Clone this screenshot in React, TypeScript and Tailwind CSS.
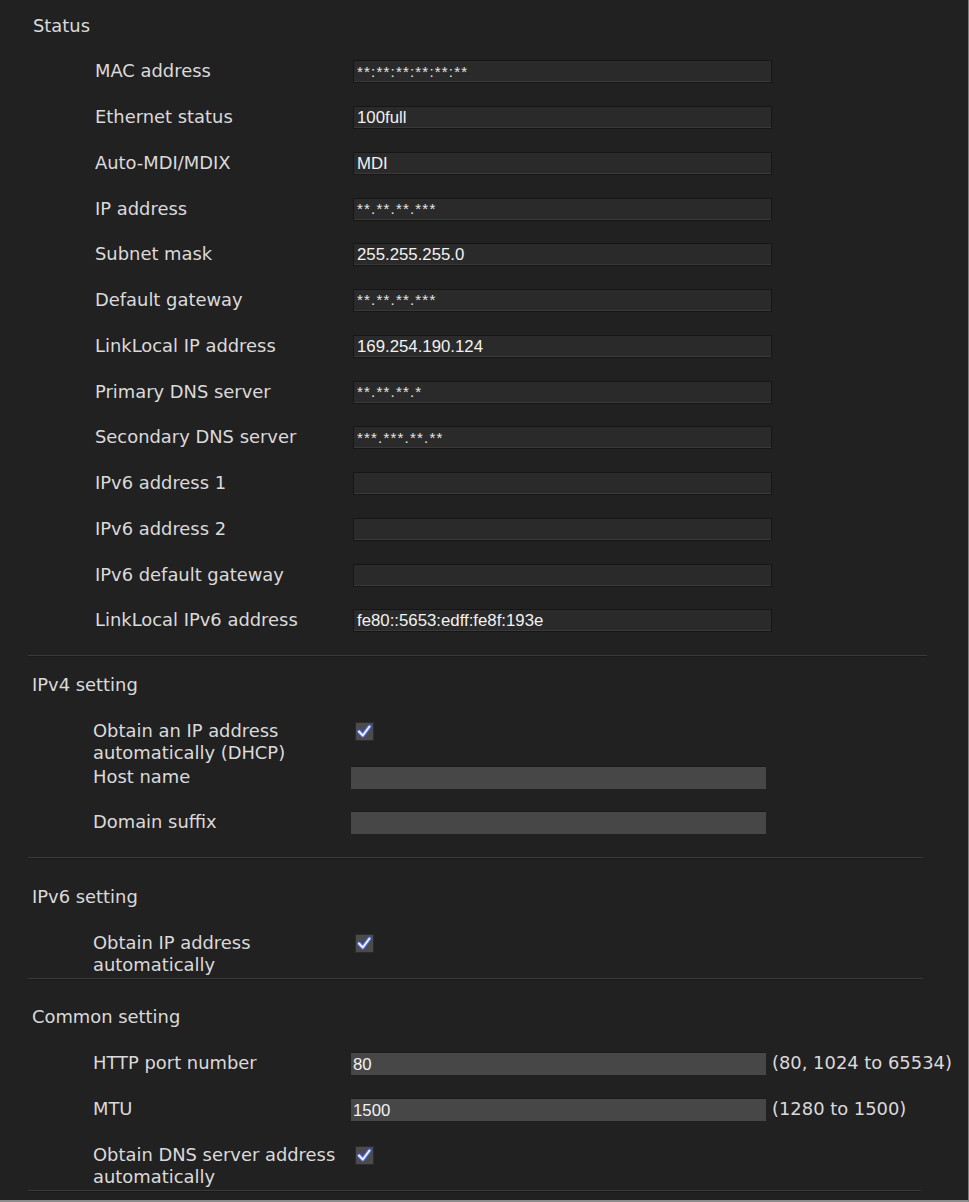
const STATUS = [
  { label: 'MAC address', value: '**:**:**:**:**:**', masked: true },
  { label: 'Ethernet status', value: '100full' },
  { label: 'Auto-MDI/MDIX', value: 'MDI' },
  { label: 'IP address', value: '**.**.**.***', masked: true },
  { label: 'Subnet mask', value: '255.255.255.0' },
  { label: 'Default gateway', value: '**.**.**.***', masked: true },
  { label: 'LinkLocal IP address', value: '169.254.190.124' },
  { label: 'Primary DNS server', value: '**.**.**.*', masked: true },
  { label: 'Secondary DNS server', value: '***.***.**.**', masked: true },
  { label: 'IPv6 address 1', value: '' },
  { label: 'IPv6 address 2', value: '' },
  { label: 'IPv6 default gateway', value: '' },
  { label: 'LinkLocal IPv6 address', value: 'fe80::5653:edff:fe8f:193e' },
]

const label = "font-['DejaVu_Sans',sans-serif] text-[17.9px] text-[#dadada]"
const valueFont = "font-['Liberation_Sans',Arial,sans-serif] text-[16.8px] text-[#f2f2f2]"

function Checkbox() {
  return (
    <svg width="19" height="19" viewBox="0 0 19 19" className="shrink-0">
      <rect x="0.5" y="0.5" width="18" height="18" fill="#4b4b4e" stroke="#2c2c2e" />
      <path d="M4 9.5 L7.8 13.5 L14.5 4.5" fill="none" stroke="#4d6ef2" strokeWidth="4" strokeLinecap="round" strokeLinejoin="round" />
      <path d="M4 9.5 L7.8 13.5 L14.5 4.5" fill="none" stroke="#eef1ff" strokeWidth="2" strokeLinecap="round" strokeLinejoin="round" />
    </svg>
  )
}

function Divider({ w }: { w: string }) {
  return <div className={`ml-[28px] h-[2px] bg-[#3a3a3b] border-b border-[#1a1a1a] ${w}`} />
}

function Heading({ children, cls }: { children: string; cls: string }) {
  return (
    <div className={`flex items-center pl-[32px] ${cls}`}>
      <span className={label}>{children}</span>
    </div>
  )
}

function GrayField({ value }: { value?: string }) {
  return (
    <div className="w-[415px] h-[23px] bg-[#474748] border-t border-[#1b1b1b] flex items-center pl-[2px]">
      <span className={valueFont}>{value}</span>
    </div>
  )
}

export default function App() {
  return (
    <div className="w-[969px] h-[1202px] bg-[#222122] border-r border-[#7c7c7c] border-b-2 border-b-[#8c8c8c] overflow-hidden pt-[4px]">
      <Heading cls="h-[45px] pl-[33px]">Status</Heading>
      <div className="flex flex-col">
        {STATUS.map((r) => (
          <div key={r.label} className="h-[45.75px] flex items-center pl-[95px]">
            <div className={`w-[258px] ${label}`}>{r.label}</div>
            <div className="w-[419px] h-[23px] bg-[#2b2a2b] border border-[#161616] shadow-[inset_0_-1px_0_#3a3a3a] flex items-center pl-[3px]">
              {r.masked ? (
                <span className="font-['Liberation_Sans',Arial,sans-serif] text-[15px] tracking-[1.2px] text-[#e6e6e6]">
                  {r.value}
                </span>
              ) : (
                <span className={valueFont}>{r.value}</span>
              )}
            </div>
          </div>
        ))}
      </div>

      <div className="mt-[11px]">
        <Divider w="w-[899px]" />
      </div>

      <Heading cls="h-[58px]">IPv4 setting</Heading>
      <div className="flex items-start pl-[93px] mt-[5px]">
        <div className={`w-[262px] leading-[22px] ${label}`}>
          Obtain an IP address
          <br />
          automatically (DHCP)
        </div>
        <div className="pt-[2px]">
          <Checkbox />
        </div>
      </div>
      <div className="h-[36px] flex items-start pl-[93px] pt-[2px]">
        <div className={`w-[258px] leading-[22px] ${label}`}>Host name</div>
        <GrayField />
      </div>
      <div className="h-[46px] flex items-center pl-[93px]">
        <div className={`w-[258px] ${label}`}>Domain suffix</div>
        <GrayField />
      </div>

      <div className="mt-[11px]">
        <Divider w="w-[895px]" />
      </div>

      <Heading cls="h-[58px] pt-[20px]">IPv6 setting</Heading>
      <div className="flex items-start pl-[93px] mt-[15px]">
        <div className={`w-[262px] leading-[22px] ${label}`}>
          Obtain IP address
          <br />
          automatically
        </div>
        <div className="pt-[2px]">
          <Checkbox />
        </div>
      </div>

      <div className="mt-[2px]">
        <Divider w="w-[895px]" />
      </div>

      <Heading cls="h-[61px] pt-[14px]">Common setting</Heading>
      <div className="h-[46px] flex items-center pl-[93px]">
        <div className={`w-[258px] ${label}`}>HTTP port number</div>
        <GrayField value="80" />
        <span className={`ml-[6px] ${label}`}>(80, 1024 to 65534)</span>
      </div>
      <div className="h-[46px] flex items-center pl-[93px]">
        <div className={`w-[258px] ${label}`}>MTU</div>
        <GrayField value="1500" />
        <span className={`ml-[6px] ${label}`}>(1280 to 1500)</span>
      </div>
      <div className="flex items-start pl-[93px] mt-[11px]">
        <div className={`w-[262px] leading-[22px] ${label}`}>
          Obtain DNS server address
          <br />
          automatically
        </div>
        <div className="pt-[2px]">
          <Checkbox />
        </div>
      </div>
      <div className="mt-[2px]">
        <Divider w="w-[893px]" />
      </div>
    </div>
  )
}
